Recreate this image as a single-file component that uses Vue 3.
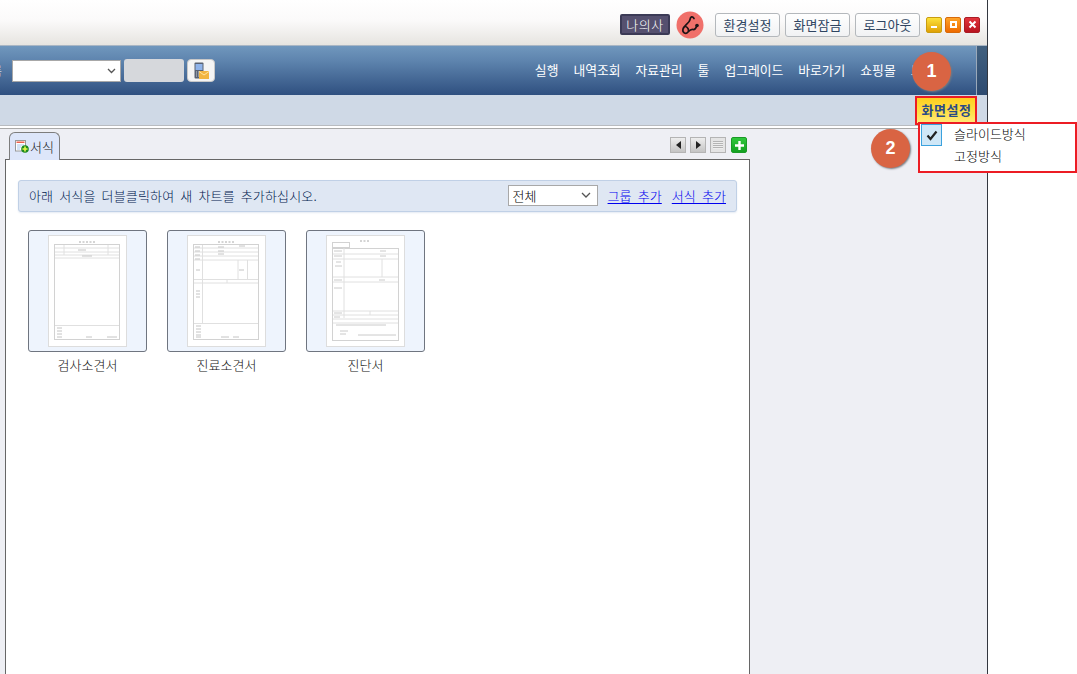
<script setup>
const menus = ['실행', '내역조회', '자료관리', '툴', '업그레이드', '바로가기', '쇼핑몰', '도움말']
const topButtons = ['환경설정', '화면잠금', '로그아웃']
const forms = [
  { name: '검사소견서', kind: 'a' },
  { name: '진료소견서', kind: 'b' },
  { name: '진단서', kind: 'c' }
]
</script>

<template>
  <div class="page">
    <div class="app">
      <header class="top">
        <span class="company">나의사</span>
        <span class="logo">
          <svg width="28" height="28" viewBox="0 0 28 28">
            <circle cx="14" cy="14" r="13.500" fill="#f0706a" />
            <path d="M18 7.500C16.500 5 14.500 5.500 14 8.500C13.500 12 8 14.500 7 18C6 22 10 23.500 12 21C13.500 19 11.500 16 9.500 15.500M12 21C13.500 19.500 15 18 17 18.500C19 18.800 20 17 20.500 15.500" fill="none" stroke="#1c1416" stroke-width="1.700" stroke-linecap="round" />
            <circle cx="21" cy="14.500" r="1.800" fill="#1c1416" />
          </svg>
        </span>
        <button v-for="b in topButtons" :key="b" class="top-btn">{{ b }}</button>
        <div class="win-btns">
          <span class="win min"><i></i></span>
          <span class="win max"><i></i></span>
          <span class="win close">
            <svg width="9" height="9" viewBox="0 0 9 9"><path d="M1.500 1.500l6 6M7.500 1.500l-6 6" stroke="#fff" stroke-width="2" /></svg>
          </span>
        </div>
      </header>

      <nav class="nav">
        <span class="cut">름</span>
        <div class="fake-select"><svg width="9" height="6" viewBox="0 0 9 6"><path d="M1 1l3.500 3.500L8 1" fill="none" stroke="#555" stroke-width="1.300" /></svg></div>
        <div class="grey-box"></div>
        <div class="sms-btn">
          <svg width="15" height="17" viewBox="0 0 15 17">
            <rect x="0.500" y="0.500" width="9" height="16" rx="1" fill="#596273" />
            <rect x="1.500" y="2" width="7" height="6" fill="#8fb3ea" />
            <path d="M2 10h1M4 10h1M6 10h1M2 12h1M4 12h1M2 14h1M4 14h1" stroke="#c8ccd4" />
            <rect x="5" y="9" width="10" height="8" fill="#f2b540" />
            <path d="M5 9.500l5 3.500 5-3.500" fill="none" stroke="#ffe3a0" stroke-width="1" />
          </svg>
        </div>
        <div class="menu">
          <span v-for="m in menus" :key="m" class="menu-item">{{ m }}</span>
        </div>
        <div class="nav-end"></div>
      </nav>

      <div class="sub">
        <span class="screen-btn">화면설정</span>
      </div>

      <main class="content">
        <div class="tabs">
          <div class="tab">
            <svg width="14" height="13" viewBox="0 0 14 13">
              <rect x="0.500" y="0.500" width="10" height="10.500" fill="#fff" stroke="#999" />
              <rect x="1.500" y="1.500" width="8" height="1.500" fill="#f0604c" />
              <path d="M2 5h7M2 7h4M2 9h3" stroke="#a9c8ec" />
              <circle cx="10" cy="9" r="3.800" fill="#1e8a1e" />
              <path d="M10 6.500v5M7.500 9h5" stroke="#e8f84c" stroke-width="1.600" />
            </svg>
            <span class="tab-label">서식</span>
          </div>
          <div class="tab-tools">
            <span class="tool"><i class="tri left"></i></span>
            <span class="tool"><i class="tri right"></i></span>
            <span class="tool list"><i></i></span>
            <span class="tool add">
              <svg width="11" height="11" viewBox="0 0 11 11"><path d="M5.500 1v9M1 5.500h9" stroke="#fff" stroke-width="2.400" /></svg>
            </span>
          </div>
        </div>

        <section class="panel">
          <div class="notice">
            <span class="notice-text">아래 서식을 더블클릭하여 새 차트를 추가하십시오.</span>
            <div class="type-select">
              <span>전체</span>
              <svg width="10" height="6" viewBox="0 0 10 6"><path d="M1 1l4 4 4-4" fill="none" stroke="#555" stroke-width="1.300" /></svg>
            </div>
            <a class="link">그룹 추가</a>
            <a class="link">서식 추가</a>
          </div>

          <div class="cards">
            <div v-for="f in forms" :key="f.name" class="card">
              <div class="thumb">
                <div class="sheet">
                  <svg v-if="f.kind === 'a'" width="79" height="112" viewBox="0 0 79 112">
                    <path d="M31 7h17" stroke="#aaa" stroke-dasharray="2 1.500" />
                    <rect x="6.500" y="9.500" width="65" height="95" fill="none" stroke="#d2d2d2" />
                    <path d="M7 13h64M7 17h64M7 20h64M7 23h64M16 10v10M60 10v10M7 90.500h64" stroke="#e0e0e0" />
                    <path d="M30 15h8M34 21h10M9 93h5M9 96h5M9 99h5M9 102h5M38 102h6M59 102h10" stroke="#c4c4c4" />
                  </svg>
                  <svg v-else-if="f.kind === 'b'" width="79" height="112" viewBox="0 0 79 112">
                    <path d="M31 7h17" stroke="#aaa" stroke-dasharray="2 1.500" />
                    <rect x="6.500" y="9.500" width="65" height="95" fill="none" stroke="#d2d2d2" />
                    <path d="M7 13h64M7 17h64M7 21h64M7 25h64M7 44.500h64M7 48h64M15.500 10v78M51 25v20M60.500 25v20M40 44v4M7 88.500h64" stroke="#e0e0e0" />
                    <path d="M8 12h5M8 16h5M8 20h5M8 24h5M9 35h4M31 12h6M31 16h6M31 19h6M52 11h6M52 35h5M9 56h4M9 59h4M9 62h4M9 91h5M9 94h5M9 97h5M9 100h5M9 102h5M34 102h8M46 102h6" stroke="#c4c4c4" />
                  </svg>
                  <svg v-else width="79" height="112" viewBox="0 0 79 112">
                    <path d="M34 6h10" stroke="#aaa" stroke-dasharray="2 1.500" />
                    <rect x="6.500" y="7.500" width="17" height="5" fill="none" stroke="#d2d2d2" />
                    <rect x="6.500" y="13.500" width="66" height="92" fill="none" stroke="#d2d2d2" />
                    <path d="M7 19h65M7 24h65M18 13v70M7 42h65M56 24v18M7 47h65M7 76h65M7 80h65M7 84h65M44 76v4M7 88h65" stroke="#e0e0e0" />
                    <path d="M8 16h8M8 21h8M10 27h5M9 31h7M8 45h8M8 53h8M54 16h6M54 21h6M53 45h6M8 78h8M8 82h6M10 90h50M32 100h38M14 96h8M14 99h6" stroke="#cacaca" />
                  </svg>
                </div>
              </div>
              <span class="card-name">{{ f.name }}</span>
            </div>
          </div>
        </section>
      </main>

      <!-- overlays: annotations on top of the screenshot -->
      <span class="marker one">1</span>
      <span class="marker two">2</span>
      <div class="dropdown">
        <div class="drop-item">
          <span class="check">
            <svg width="12" height="11" viewBox="0 0 12 11"><path d="M1.500 5.500L4.500 9 10.500 1.500" fill="none" stroke="#222" stroke-width="2.200" /></svg>
          </span>
          <span class="drop-label">슬라이드방식</span>
        </div>
        <div class="drop-item">
          <span class="check blank"></span>
          <span class="drop-label">고정방식</span>
        </div>
      </div>
    </div>
  </div>
</template>

<style>
html, body { margin: 0; background: #fff; overflow: hidden; }
</style>

<style scoped>
.page {
  width: 1077px;
  height: 674px;
  overflow: hidden;
  font-family: "Noto Sans CJK KR", "Noto Sans", sans-serif;
  font-weight: 300;
  background: #fff;
}
.app {
  position: relative;
  width: 987px;
  height: 674px;
  border-right: 1px solid #33373f;
  display: flex;
  flex-direction: column;
}
.top {
  height: 45px;
  flex: none;
  box-sizing: border-box;
  display: flex;
  align-items: center;
  justify-content: flex-end;
  padding: 4px 7px 0 0;
  background: linear-gradient(#fff 0%, #fbfafa 45%, #e6e4e0 100%);
}
.company {
  box-sizing: border-box;
  width: 50px;
  height: 21px;
  line-height: 17px;
  text-align: center;
  font-size: 13px;
  letter-spacing: 0.5px;
  color: #fff;
  background: #55506f;
  border: 2px solid #3b3a56;
  border-radius: 2px;
  margin-right: 6px;
}
.logo { width: 28px; height: 28px; margin-right: 11px; display: block; }
.top-btn {
  box-sizing: border-box;
  width: 65px;
  height: 24px;
  margin: 0 5px 0 0;
  padding: 0;
  font: 400 13px "Noto Sans CJK KR", sans-serif;
  color: #2e4461;
  background: linear-gradient(#fff, #f1f2f4);
  border: 1px solid #b4b8bc;
  border-radius: 3px;
}
.win-btns { display: flex; gap: 3px; margin-left: 1px; }
.win {
  box-sizing: border-box;
  width: 16px;
  height: 16px;
  display: flex;
  align-items: center;
  justify-content: center;
  border-radius: 2px;
}
.win.min { background: linear-gradient(#fce23a, #e0a005); border: 1px solid #c99c10; align-items: flex-end; padding-bottom: 4px; }
.win.min i { width: 6px; height: 2px; background: #fff; }
.win.max { background: linear-gradient(#ffa328, #ee6a00); border: 1px solid #d76a0a; }
.win.max i { box-sizing: border-box; width: 7px; height: 7px; border: 2px solid #fff; }
.win.close { background: linear-gradient(#e2343c, #b8141f); border: 1px solid #a91c24; }

.nav {
  height: 50px;
  flex: none;
  display: flex;
  align-items: center;
  background: linear-gradient(#7097bd 0%, #5e84ae 30%, #2f5080 100%);
  border-top: 1px solid #a9b6c4;
  box-sizing: border-box;
  color: #fff;
  overflow: hidden;
}
.cut { font-size: 12px; margin-left: -9px; width: 21px; flex: none; }
.fake-select {
  box-sizing: border-box;
  width: 109px;
  height: 22px;
  flex: none;
  background: #fff;
  border: 1px solid #a8a8a8;
  display: flex;
  align-items: center;
  justify-content: flex-end;
  padding-right: 4px;
}
.grey-box {
  width: 60px;
  height: 23px;
  flex: none;
  margin-left: 3px;
  background: #d6d8dc;
  border-radius: 3px;
}
.sms-btn {
  box-sizing: border-box;
  width: 28px;
  height: 23px;
  flex: none;
  margin-left: 3px;
  background: #f4f4f4;
  border: 1px solid #c8c8c8;
  border-radius: 4px;
  display: flex;
  align-items: center;
  justify-content: center;
}
.menu {
  flex: 1;
  display: flex;
  justify-content: flex-end;
  gap: 15px;
  padding: 0 30px 2px 0;
  font-size: 12.800px;
  font-weight: 400;
  white-space: nowrap;
}
.nav-end {
  width: 11px;
  height: 100%;
  flex: none;
  box-sizing: border-box;
  border-left: 1px solid #9aa9ba;
  background: linear-gradient(#41607f, #2d4a70);
}

.sub {
  height: 31px;
  flex: none;
  box-sizing: border-box;
  background: #cfd9e6;
  display: flex;
  justify-content: flex-end;
  align-items: flex-start;
  padding-right: 10px;
  border-bottom: 1px solid #b9bcc0;
}
.screen-btn {
  box-sizing: border-box;
  width: 62px;
  height: 29px;
  margin-top: 1px;
  padding-left: 1px;
  line-height: 24px;
  text-align: center;
  font-size: 13px;
  letter-spacing: 0.5px;
  font-weight: 700;
  color: #2a4a86;
  background: linear-gradient(#ffcf1e, #ffe04a 60%, #ffe97a);
  border: 2px solid #ec1c24;
}

.content {
  flex: 1;
  min-height: 0;
  background: #eeeff4;
  border-top: 2px solid #fff;
  box-shadow: inset 0 1px 0 #a9a9a9;
  display: flex;
  flex-direction: column;
  padding: 4px 0 0 5px;
  box-sizing: border-box;
}
.tabs {
  width: 745px;
  height: 27px;
  flex: none;
  display: flex;
  justify-content: space-between;
  box-sizing: border-box;
  padding-left: 4px;
  position: relative;
  z-index: 1;
}
.tab {
  box-sizing: border-box;
  width: 51px;
  height: 28px;
  display: flex;
  align-items: center;
  gap: 1px;
  padding: 0 0 0 5px;
  background: #dde6fa;
  border: 1px solid #7d7d7d;
  border-bottom: none;
  border-radius: 6px 6px 0 0;
  font-size: 13px;
  color: #111;
}
.tab-tools { display: flex; gap: 4px; padding: 5px 3px 0 0; }
.tool {
  box-sizing: border-box;
  width: 16px;
  height: 16px;
  display: flex;
  align-items: center;
  justify-content: center;
  background: linear-gradient(#eee, #c4c4c4);
  border: 1px solid #b4b4b4;
}
.tri { width: 0; height: 0; border-top: 4px solid transparent; border-bottom: 4px solid transparent; }
.tri.left { border-right: 5px solid #222; }
.tri.right { border-left: 5px solid #222; }
.tool.list { background: #e4e4e4; }
.tool.list i { width: 10px; height: 8px; background: repeating-linear-gradient(#b4b4b4 0 1px, #eee 1px 2px); }
.tool.add { margin-left: 1px; background: linear-gradient(#30c83c, #12a020); border-color: #1a9a26; border-radius: 2px; }

.panel {
  flex: 1;
  width: 745px;
  box-sizing: border-box;
  background: #fff;
  border: 1px solid #666;
  border-bottom: none;
  padding: 20px 12px 0;
}
.notice {
  box-sizing: border-box;
  width: 719px;
  height: 32px;
  display: flex;
  align-items: center;
  padding: 0 10px 2px 10px;
  background: #dfe7f3;
  border: 1px solid #c0d0e6;
  border-radius: 3px;
  box-shadow: 0 1px 2px #e4eaf3;
  font-size: 13px;
  color: #00204f;
}
.notice-text { flex: 1; word-spacing: 3px; letter-spacing: 0.15px; white-space: nowrap; }
.type-select {
  box-sizing: border-box;
  width: 90px;
  height: 21px;
  margin-right: 10px;
  display: flex;
  align-items: center;
  justify-content: space-between;
  padding: 0 6px 0 4px;
  background: #fff;
  border: 1px solid #a8a8a8;
  color: #000;
}
.link {
  color: #0000ee;
  text-decoration: underline;
  text-underline-offset: 2px;
  word-spacing: 3.500px;
  white-space: nowrap;
}
.link + .link { margin-left: 10px; }
.cards {
  display: flex;
  gap: 20px;
  padding: 18px 0 0 10px;
}
.card { width: 119px; display: flex; flex-direction: column; align-items: center; }
.thumb {
  box-sizing: border-box;
  width: 119px;
  height: 122px;
  display: flex;
  align-items: center;
  justify-content: center;
  background: #eef4fd;
  border: 1px solid #6f7580;
  border-radius: 3px;
}
.sheet {
  box-sizing: border-box;
  width: 79px;
  height: 112px;
  background: #fff;
  border: 1px solid #ddd;
  display: flex;
}
.sheet svg { display: block; margin: -1px; flex: none; }
.card-name {
  margin-top: 4px;
  font-size: 13px;
  line-height: 18px;
  color: #111;
}

.marker {
  position: absolute;
  box-sizing: border-box;
  width: 39px;
  height: 39px;
  border-radius: 50%;
  background: #d96443;
  color: #fff;
  font: 700 18px/39px "Liberation Sans", sans-serif;
  text-align: center;
  box-shadow: 1px 1px 2px #777a80;
}
.marker.one { left: 912px; top: 52px; }
.marker.two { left: 871px; top: 129px; }
.dropdown {
  position: absolute;
  left: 918px;
  top: 122px;
  box-sizing: border-box;
  width: 159px;
  height: 51px;
  padding: 0 0 0 1px;
  background: #fff;
  border: 2px solid #ec1c24;
  font-size: 13px;
  color: #000;
}
.drop-item { height: 22px; display: flex; align-items: center; gap: 12px; white-space: nowrap; }
.drop-label { margin-top: -4px; }
.check {
  box-sizing: border-box;
  width: 21px;
  height: 22px;
  display: flex;
  align-items: center;
  justify-content: center;
  background: #cfe7f7;
  border: 1px solid #3ba2de;
  flex: none;
}
.check.blank { background: none; border: none; }
</style>
